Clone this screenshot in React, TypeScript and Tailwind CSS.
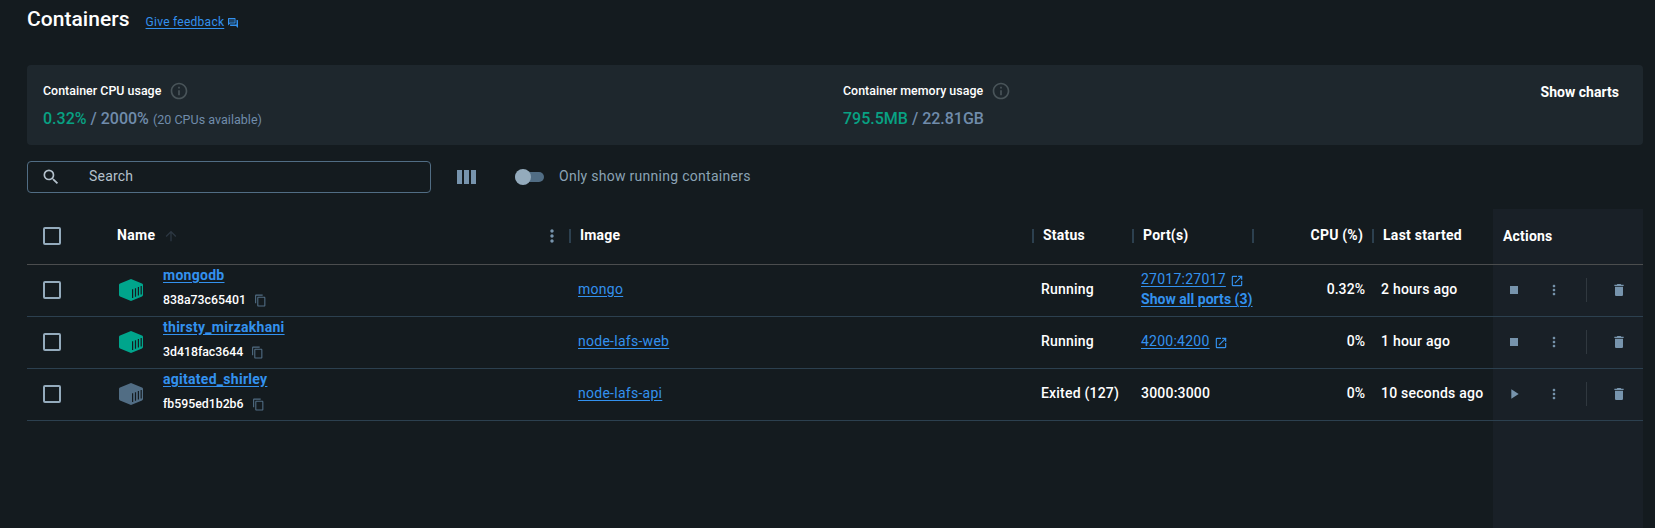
import type { ReactNode } from "react";
import {
  MdArrowUpward,
  MdContentCopy,
  MdDelete,
  MdInfoOutline,
  MdMoreVert,
  MdOpenInNew,
  MdPlayArrow,
  MdSearch,
  MdStop,
} from "react-icons/md";

type Port = { label: string; link: boolean; more?: string };
type Container = {
  name: string;
  id: string;
  image: string;
  status: string;
  running: boolean;
  port: Port;
  cpu: string;
  started: string;
};

const containers: Container[] = [
  {
    name: "mongodb",
    id: "838a73c65401",
    image: "mongo",
    status: "Running",
    running: true,
    port: { label: "27017:27017", link: true, more: "Show all ports (3)" },
    cpu: "0.32%",
    started: "2 hours ago",
  },
  {
    name: "thirsty_mirzakhani",
    id: "3d418fac3644",
    image: "node-lafs-web",
    status: "Running",
    running: true,
    port: { label: "4200:4200", link: true },
    cpu: "0%",
    started: "1 hour ago",
  },
  {
    name: "agitated_shirley",
    id: "fb595ed1b2b6",
    image: "node-lafs-api",
    status: "Exited (127)",
    running: false,
    port: { label: "3000:3000", link: false },
    cpu: "0%",
    started: "10 seconds ago",
  },
];

const columns = "grid grid-cols-[82px_461px_463px_100px_120px_120px_120px_150px]";
const link = "text-[#3391ee] underline underline-offset-2";

function Checkbox() {
  return <span className="ml-4 block size-[18px] rounded-[2px] border-2 border-[#94abbc]" />;
}

function Separator() {
  return <span className="-ml-px h-[14px] w-[2px] shrink-0 bg-[#2c404f]" />;
}

function HeaderCell({ children }: { children?: ReactNode }) {
  return (
    <div className="flex items-center">
      <Separator />
      <div className="flex-1 pb-[3px] pl-[9px]">{children}</div>
    </div>
  );
}

function FeedbackIcon() {
  return (
    <svg viewBox="0 0 24 24" className="mt-[2px] size-3" fill="currentColor">
      <path opacity=".35" d="M15 4H4v8.17L5.17 11H15V4Z" />
      <path d="M15 4v7H5.17L4 12.17V4h11m1-2H3c-.55 0-1 .45-1 1v14l4-4h10c.55 0 1-.45 1-1V3c0-.55-.45-1-1-1Zm5 4h-2v9H6v2c0 .55.45 1 1 1h11l4 4V7c0-.55-.45-1-1-1Z" />
    </svg>
  );
}

function ContainerIcon({ running }: { running: boolean }) {
  return (
    <svg
      viewBox="0 0 24 22"
      className={running ? "h-[22px] w-6 text-[#00a58c]" : "h-[22px] w-6 text-[#516d84]"}
      fill="currentColor"
    >
      <path d="M12 0 23 4.6q1 .4 1 1.4v10q0 1-1 1.4L12 22 1 17.4q-1-.4-1-1.4V6q0-1 1-1.4Z" />
      <path
        d="M13.6 10.3v8.7M16.5 9.2v8.6M19.4 8v8.6M22.2 6.9v8.6"
        stroke="#141b1f"
        strokeWidth="1.2"
      />
    </svg>
  );
}

function Usage({ title, used, total, note }: { title: string; used: string; total: string; note?: string }) {
  return (
    <div className="whitespace-nowrap">
      <div className="flex h-5 items-center gap-2 text-[12.4px] font-medium tracking-[0.03px] text-white">
        {title}
        <MdInfoOutline className="size-5 text-[#495459]" />
      </div>
      <div className="mt-[6px] text-[16px] leading-6 font-medium text-[#708cab]">
        <span className="text-[#08a183]">{used}</span> / {total}
        {note && <span className="ml-1 text-[12.5px] font-normal tracking-[0.03px]">{note}</span>}
      </div>
    </div>
  );
}

function Row({ item }: { item: Container }) {
  return (
    <div className={`${columns} h-[52px] items-center border-b border-[#2c404f] pb-px`}>
      <Checkbox />
      <div className="flex h-[50px] items-center pl-[10px]">
        <ContainerIcon running={item.running} />
        <div className="ml-5 flex h-[50px] flex-col">
          <a className={`${link} h-5 leading-5 font-bold tracking-[0.28px]`}>{item.name}</a>
          <div className="mt-[5px] flex h-5 items-center gap-[8px] text-[12.3px] font-medium tracking-normal">
            {item.id}
            <MdContentCopy className="size-[13px] text-[#516d84]" />
          </div>
        </div>
      </div>
      <div className="pb-[2px] pl-2 tracking-[0.27px]">
        <a className={link}>{item.image}</a>
      </div>
      <div className="pb-[2px] pl-2 font-medium whitespace-nowrap">{item.status}</div>
      <div className="flex flex-col pb-[2px] pl-2 whitespace-nowrap">
        {item.port.link ? (
          <span className="flex items-center gap-1 tracking-[0.25px]">
            <a className={link}>{item.port.label}</a>
            <MdOpenInNew className="mt-[3px] size-[14px] text-[#3391ee]" />
          </span>
        ) : (
          <span className="font-medium">{item.port.label}</span>
        )}
        {item.port.more && <a className={`${link} font-bold tracking-[0.03px]`}>{item.port.more}</a>}
      </div>
      <div className="pr-2 pb-[2px] text-right font-medium tracking-[0.05px]">{item.cpu}</div>
      <div className="pb-[2px] pl-2 font-medium tracking-[0.23px] whitespace-nowrap">{item.started}</div>
      <div className="flex items-center text-[#7794ad]">
        <span className="flex w-[42px] justify-center">
          {item.running ? <MdStop className="size-4" /> : <MdPlayArrow className="size-4" />}
        </span>
        <MdMoreVert className="ml-[11px] size-4" />
        <span className="ml-6 h-6 w-px bg-[#30383f]" />
        <MdDelete className="ml-6 size-4" />
      </div>
    </div>
  );
}

export default function App() {
  return (
    <main className="flex h-[528px] w-[1655px] flex-col overflow-hidden bg-[#141b1f] pr-3 pl-[27px] font-[Roboto,sans-serif] text-[14px] leading-5 text-white">
      <header className="flex h-[65px] items-start pt-[5px]">
        <h1 className="text-[21px] leading-7 font-medium tracking-[0.04px]">Containers</h1>
        <a className="mt-[9px] ml-4 flex items-center gap-[3px] text-[12px] leading-4 text-[#3391ee]">
          <span className="tracking-[0.26px] underline underline-offset-2">Give feedback</span>
          <FeedbackIcon />
        </a>
      </header>

      <section className="grid h-20 grid-cols-[800px_1fr_auto] items-start rounded-[4px] bg-[#1e272d] pt-4 pr-6 pl-4">
        <Usage title="Container CPU usage" used="0.32%" total="2000%" note="(20 CPUs available)" />
        <Usage title="Container memory usage" used="795.5MB" total="22.81GB" />
        <button className="mt-[1px] h-5 font-bold tracking-[0.03px] whitespace-nowrap">Show charts</button>
      </section>

      <div className="mt-4 flex h-8 items-center">
        <label className="flex h-8 w-[404px] items-center rounded-[4px] border border-[#516d84] pl-[13px] tracking-[0.2px] text-[#b4c1cc]">
          <MdSearch className="size-5" />
          <span className="pb-[2px] pl-[28px]">Search</span>
        </label>
        <div className="ml-[26px] flex gap-[2px]">
          <span className="h-[14px] w-[5px] bg-[#7794ad]" />
          <span className="h-[14px] w-[5px] bg-[#7794ad]" />
          <span className="h-[14px] w-[5px] bg-[#7794ad]" />
        </div>
        <span className="ml-[39px] flex h-[10px] w-[29px] items-center rounded-full bg-[#516d84]">
          <span className="size-4 rounded-full bg-[#94abbc]" />
        </span>
        <span className="ml-[15px] pb-[2px] tracking-[0.28px] text-[#8ba3b5]">Only show running containers</span>
      </div>

      <section className="mt-4 flex-1 bg-[linear-gradient(to_right,transparent_1466px,#192027_1466px)] tracking-[0.2px]">
        <div className={`${columns} h-14 items-center border-b border-[#4b4d4e] pb-px font-bold`}>
          <Checkbox />
          <div className="flex items-center pr-2 pl-2">
            <span className="pb-[3px] tracking-[0.35px]">Name</span>
            <MdArrowUpward className="ml-[8px] size-4 text-[#2c3742]" />
            <MdMoreVert className="ml-auto size-5 text-[#7794ad]" />
          </div>
          <HeaderCell>Image</HeaderCell>
          <HeaderCell>Status</HeaderCell>
          <HeaderCell>Port(s)</HeaderCell>
          <HeaderCell>
            <div className="pr-[10px] text-right">CPU (%)</div>
          </HeaderCell>
          <HeaderCell>
            <span className="tracking-[0.28px]">Last started</span>
          </HeaderCell>
          <div className="pl-[10px]">Actions</div>
        </div>
        {containers.map((item) => (
          <Row key={item.id} item={item} />
        ))}
      </section>
    </main>
  );
}
